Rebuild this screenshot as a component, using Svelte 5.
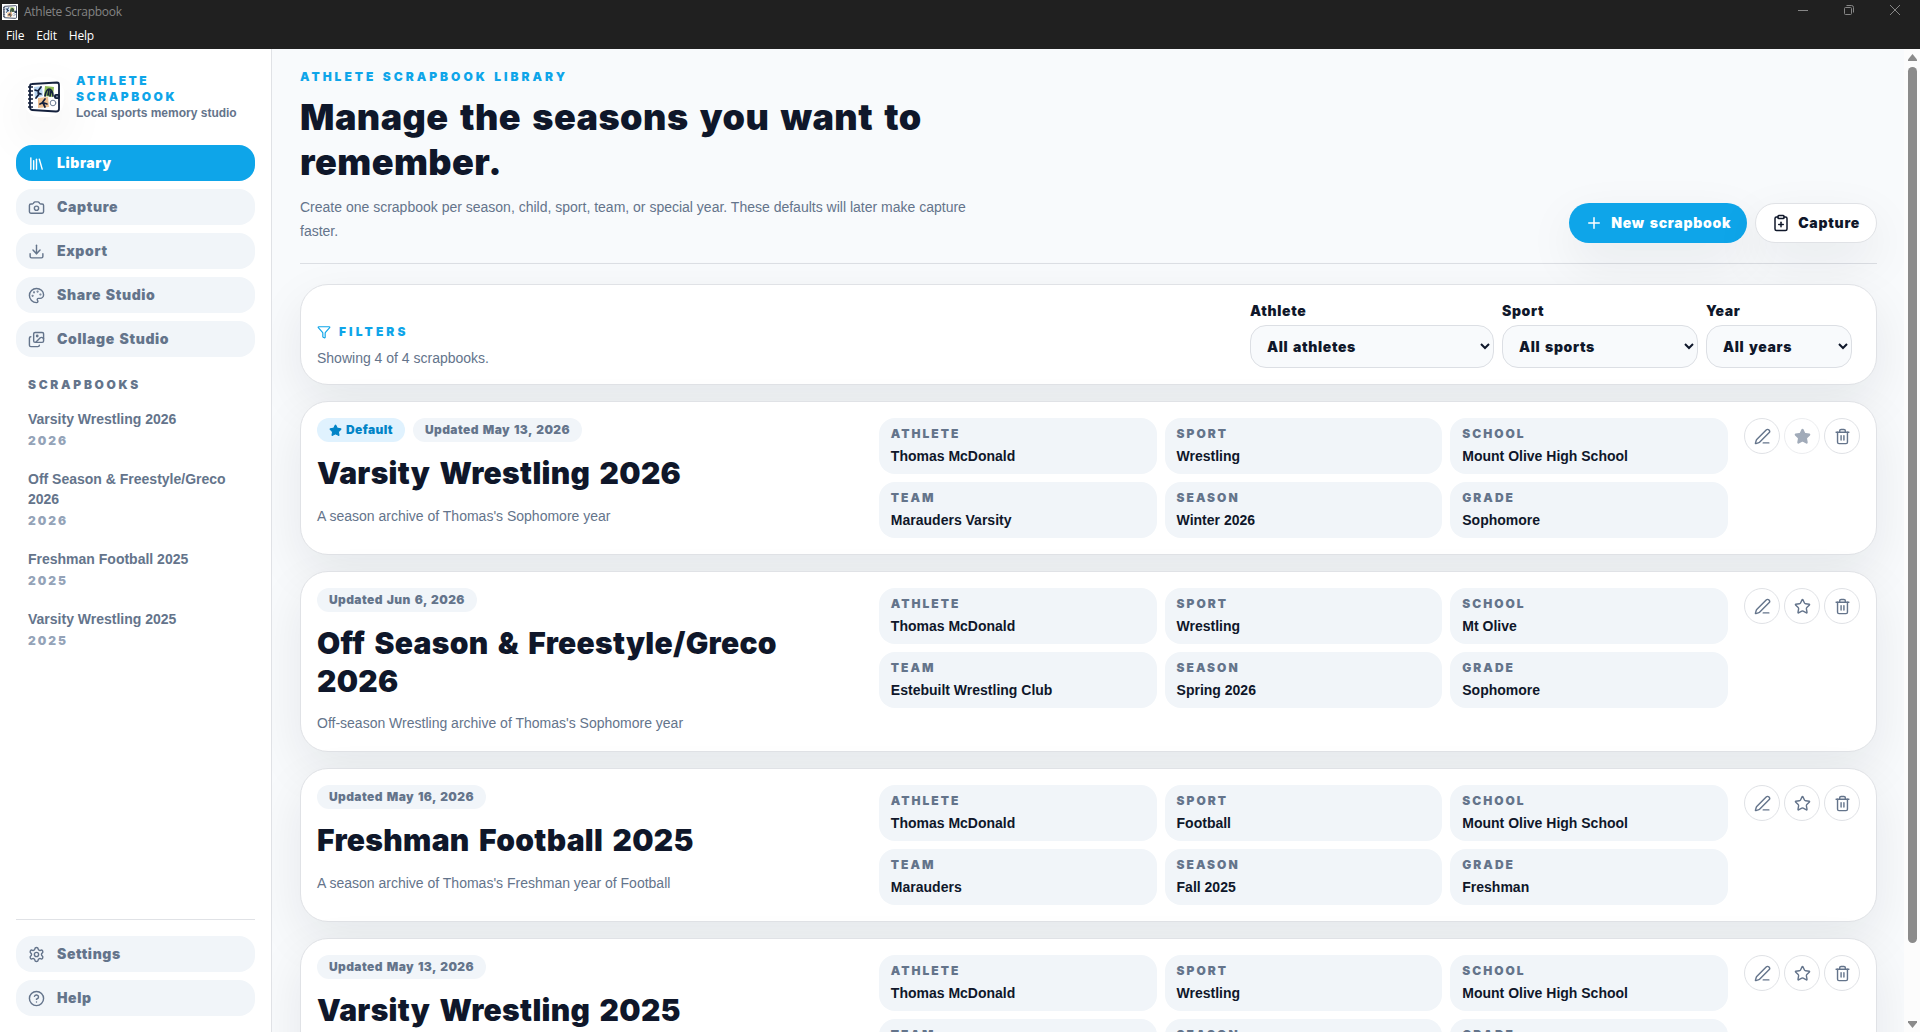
<script>
	const icons = {
		library: '<path d="m16 6 4 14"/><path d="M12 6v14"/><path d="M8 8v12"/><path d="M4 4v16"/>',
		camera:
			'<path d="M13.997 4a2 2 0 0 1 1.76 1.05l.486.9A2 2 0 0 0 18.003 7H20a2 2 0 0 1 2 2v9a2 2 0 0 1-2 2H4a2 2 0 0 1-2-2V9a2 2 0 0 1 2-2h1.997a2 2 0 0 0 1.759-1.048l.489-.904A2 2 0 0 1 10.004 4z"/><circle cx="12" cy="13" r="3"/>',
		download:
			'<path d="M12 15V3"/><path d="M21 15v4a2 2 0 0 1-2 2H5a2 2 0 0 1-2-2v-4"/><path d="m7 10 5 5 5-5"/>',
		palette:
			'<path d="M12 22a1 1 0 0 1 0-20 10 9 0 0 1 10 9 5 5 0 0 1-5 5h-2.25a1.75 1.75 0 0 0-1.4 2.8l.3.4a1.75 1.75 0 0 1-1.4 2.8z"/><circle cx="13.5" cy="6.5" r=".5" fill="currentColor"/><circle cx="17.5" cy="10.5" r=".5" fill="currentColor"/><circle cx="6.5" cy="12.5" r=".5" fill="currentColor"/><circle cx="8.5" cy="7.5" r=".5" fill="currentColor"/>',
		images:
			'<path d="m22 11-1.296-1.296a2.4 2.4 0 0 0-3.408 0L11 16"/><path d="M4 8a2 2 0 0 0-2 2v10a2 2 0 0 0 2 2h10a2 2 0 0 0 2-2"/><circle cx="13" cy="7" r="1" fill="currentColor"/><rect x="8" y="2" width="14" height="14" rx="2"/>',
		settings:
			'<path d="M9.671 4.136a2.34 2.34 0 0 1 4.659 0 2.34 2.34 0 0 0 3.319 1.915 2.34 2.34 0 0 1 2.33 4.033 2.34 2.34 0 0 0 0 3.831 2.34 2.34 0 0 1-2.33 4.033 2.34 2.34 0 0 0-3.319 1.915 2.34 2.34 0 0 1-4.659 0 2.34 2.34 0 0 0-3.32-1.915 2.34 2.34 0 0 1-2.33-4.033 2.34 2.34 0 0 0 0-3.831A2.34 2.34 0 0 1 6.35 6.051a2.34 2.34 0 0 0 3.319-1.915"/><circle cx="12" cy="12" r="3"/>',
		help: '<circle cx="12" cy="12" r="10"/><path d="M9.09 9a3 3 0 0 1 5.83 1c0 2-3 3-3 3"/><path d="M12 17h.01"/>',
		plus: '<path d="M5 12h14"/><path d="M12 5v14"/>',
		clipboard:
			'<rect width="8" height="4" x="8" y="2" rx="1"/><path d="M16 4h2a2 2 0 0 1 2 2v14a2 2 0 0 1-2 2H6a2 2 0 0 1-2-2V6a2 2 0 0 1 2-2h2"/><path d="M9 14h6"/><path d="M12 17v-6"/>',
		funnel:
			'<path d="M10 20a1 1 0 0 0 .553.895l2 1A1 1 0 0 0 14 21v-7a2 2 0 0 1 .517-1.341L21.74 4.67A1 1 0 0 0 21 3H3a1 1 0 0 0-.742 1.67l7.225 7.989A2 2 0 0 1 10 14z"/>',
		pen: '<path d="M13 21h8"/><path d="M21.174 6.812a1 1 0 0 0-3.986-3.987L3.842 16.174a2 2 0 0 0-.5.83l-1.321 4.352a.5.5 0 0 0 .623.622l4.353-1.32a2 2 0 0 0 .83-.497z"/>',
		star: '<path d="M11.525 2.295a.53.53 0 0 1 .95 0l2.31 4.679a2.123 2.123 0 0 0 1.595 1.16l5.166.756a.53.53 0 0 1 .294.904l-3.736 3.638a2.123 2.123 0 0 0-.611 1.878l.882 5.14a.53.53 0 0 1-.771.56l-4.618-2.428a2.122 2.122 0 0 0-1.973 0L6.396 21.01a.53.53 0 0 1-.77-.56l.881-5.139a2.122 2.122 0 0 0-.611-1.879L2.16 9.795a.53.53 0 0 1 .294-.906l5.165-.755a2.122 2.122 0 0 0 1.597-1.16z"/>',
		trash:
			'<path d="M10 11v6"/><path d="M14 11v6"/><path d="M19 6v14a2 2 0 0 1-2 2H7a2 2 0 0 1-2-2V6"/><path d="M3 6h18"/><path d="M8 6V4a2 2 0 0 1 2-2h4a2 2 0 0 1 2 2v2"/>'
	};

	const navItems = [
		{ id: "library", label: "Library", icon: "library" },
		{ id: "capture", label: "Capture", icon: "camera" },
		{ id: "export", label: "Export", icon: "download" },
		{ id: "share", label: "Share Studio", icon: "palette" },
		{ id: "collage", label: "Collage Studio", icon: "images" }
	];

	const footerItems = [
		{ id: "settings", label: "Settings", icon: "settings" },
		{ id: "help", label: "Help", icon: "help" }
	];

	const scrapbooks = [
		{
			title: "Varsity Wrestling 2026",
			year: "2026",
			updated: "May 13, 2026",
			description: "A season archive of Thomas's Sophomore year",
			athlete: "Thomas McDonald",
			sport: "Wrestling",
			school: "Mount Olive High School",
			team: "Marauders Varsity",
			season: "Winter 2026",
			grade: "Sophomore"
		},
		{
			title: "Off Season & Freestyle/Greco 2026",
			year: "2026",
			updated: "Jun 6, 2026",
			description: "Off-season Wrestling archive of Thomas's Sophomore year",
			athlete: "Thomas McDonald",
			sport: "Wrestling",
			school: "Mt Olive",
			team: "Estebuilt Wrestling Club",
			season: "Spring 2026",
			grade: "Sophomore"
		},
		{
			title: "Freshman Football 2025",
			year: "2025",
			updated: "May 16, 2026",
			description: "A season archive of Thomas's Freshman year of Football",
			athlete: "Thomas McDonald",
			sport: "Football",
			school: "Mount Olive High School",
			team: "Marauders",
			season: "Fall 2025",
			grade: "Freshman"
		},
		{
			title: "Varsity Wrestling 2025",
			year: "2025",
			updated: "May 13, 2026",
			description: "A season archive of Thomas's Freshman year",
			athlete: "Thomas McDonald",
			sport: "Wrestling",
			school: "Mount Olive High School",
			team: "Marauders",
			season: "Winter 2025",
			grade: "Freshman"
		}
	];

	const fields = ["athlete", "sport", "school", "team", "season", "grade"];

	let activePage = $state("library");
	let defaultTitle = $state("Varsity Wrestling 2026");
	let athlete = $state("");
	let sport = $state("");
	let year = $state("");

	let filtered = $derived(
		scrapbooks.filter(
			(book) =>
				(!athlete || book.athlete === athlete) &&
				(!sport || book.sport === sport) &&
				(!year || book.year === year)
		)
	);

	function unique(key) {
		return [...new Set(scrapbooks.map((book) => book[key]))];
	}
</script>

{#snippet icon(name, size = 17, fill = "none")}
	<svg
		class="icon"
		width={size}
		height={size}
		viewBox="0 0 24 24"
		{fill}
		stroke="currentColor"
		stroke-width="2"
		stroke-linecap="round"
		stroke-linejoin="round"
		aria-hidden="true">{@html icons[name]}</svg
	>
{/snippet}

{#snippet bookLogo(size)}
	<svg class="icon" width={size} height={size} viewBox="0 0 32 32" aria-hidden="true">
		<path d="M4 3 29 1.500Q31 1.500 31 4V28Q31 30.500 28 30.500L4 29Q2 29 2 26V5Q2 3 4 3Z" fill="#fff" stroke="#14213d" stroke-width="1.800" />
		<path d="M0 6h5M0 10h5M0 14h5M0 18h5M0 22h5M0 26h5" stroke="#14213d" stroke-width="1.300" />
		<path d="m6 6 8-1 1 10-8 2Z" fill="#b8d5f1" />
		<path d="m17 5 9 1-1 10-9-1Z" fill="#91bd58" />
		<path d="m10 17 10-1 1 10-11 1Z" fill="#f1c292" />
		<g fill="none" stroke="#14213d" stroke-width="1.700" stroke-linecap="round">
			<path d="m13 6-3 4-3-1m3 1 1 3-3 4m2-5 3 1" />
			<path d="M17 15c1-5 2-7 4-7s4 3 4 7m-4-6-1 5m3-4-1 5" />
			<path d="m17 18-3 4-2 1m3-1 2 4m-1-4 3 1" />
			<circle cx="25" cy="22" r="2.800" stroke="#718096" stroke-width="1" />
		</g>
		<rect x="26" y="13" width="6" height="5" rx="2" fill="#14213d" />
		<circle cx="29" cy="15.500" r="1" fill="#8391a5" />
	</svg>
{/snippet}

{#snippet navButton(item)}
	<button
		type="button"
		class="nav-button"
		class:active={activePage === item.id}
		onclick={() => (activePage = item.id)}
	>
		{@render icon(item.icon)}
		<span class="black">{item.label}</span>
	</button>
{/snippet}

<div class="window">
	<header class="chrome">
		<div class="title-bar">
			<span class="app-icon">{@render bookLogo(14)}</span>
			<span class="app-title">Athlete Scrapbook</span>
			<div class="window-controls">
				<svg width="12" height="12" viewBox="0 0 12 12"><path d="M1 6.500h10" /></svg>
				<svg width="12" height="12" viewBox="0 0 12 12"><path d="M3.500 1.500h5a2 2 0 0 1 2 2v5" /><rect x="1.500" y="3.500" width="7" height="7" rx="1" /></svg>
				<svg width="12" height="12" viewBox="0 0 12 12"><path d="m1 1 10 10M11 1 1 11" /></svg>
			</div>
		</div>
		<nav class="menu-bar">
			<span>File</span>
			<span>Edit</span>
			<span>Help</span>
		</nav>
	</header>

	<div class="shell">
		<aside class="sidebar">
			<div class="brand">
				<div class="brand-logo">{@render bookLogo(32)}</div>
				<div class="brand-text">
					<div class="brand-name black">Athlete Scrapbook</div>
					<div class="brand-tagline">Local sports memory studio</div>
				</div>
			</div>

			<nav class="nav">
				{#each navItems as item}
					{@render navButton(item)}
				{/each}
			</nav>

			<div class="book-list">
				<div class="book-list-heading black">Scrapbooks</div>
				{#each scrapbooks as book}
					<div class="book-link">
						<div class="book-link-title">{book.title}</div>
						<div class="book-link-year black">{book.year}</div>
					</div>
				{/each}
			</div>

			<nav class="nav sidebar-footer">
				{#each footerItems as item}
					{@render navButton(item)}
				{/each}
			</nav>
		</aside>

		<main class="content">
			<section class="page-header">
				<div class="intro">
					<div class="eyebrow black">Athlete Scrapbook Library</div>
					<h1 class="black">Manage the seasons you want to remember.</h1>
					<p>
						Create one scrapbook per season, child, sport, team, or special year. These defaults
						will later make capture faster.
					</p>
				</div>
				<div class="header-actions">
					<button type="button" class="pill primary">
						{@render icon("plus", 18)}
						<span class="black">New scrapbook</span>
					</button>
					<button type="button" class="pill">
						{@render icon("clipboard", 18)}
						<span class="black">Capture</span>
					</button>
				</div>
			</section>

			<section class="card filters">
				<div class="filters-info">
					<div class="filters-heading">
						{@render icon("funnel", 14)}
						<span class="black">Filters</span>
					</div>
					<div class="filters-count">
						Showing {filtered.length} of {scrapbooks.length} scrapbooks.
					</div>
				</div>
				<div class="filters-fields">
					<label>
						<span class="black">Athlete</span>
						<select class="black" bind:value={athlete}>
							<option value="">All athletes</option>
							{#each unique("athlete") as option}
								<option value={option}>{option}</option>
							{/each}
						</select>
					</label>
					<label>
						<span class="black">Sport</span>
						<select class="black" bind:value={sport}>
							<option value="">All sports</option>
							{#each unique("sport") as option}
								<option value={option}>{option}</option>
							{/each}
						</select>
					</label>
					<label>
						<span class="black">Year</span>
						<select class="black" bind:value={year}>
							<option value="">All years</option>
							{#each unique("year") as option}
								<option value={option}>{option}</option>
							{/each}
						</select>
					</label>
				</div>
			</section>

			{#each filtered as book}
				{@const isDefault = book.title === defaultTitle}
				<article class="card book">
					<div class="book-info">
						<div class="badges">
							{#if isDefault}
								<span class="badge default">
									{@render icon("star", 13, "currentColor")}
									<span class="black">Default</span>
								</span>
							{/if}
							<span class="badge"><span class="black">Updated {book.updated}</span></span>
						</div>
						<h2 class="black">{book.title}</h2>
						<p>{book.description}</p>
					</div>
					<dl class="details">
						{#each fields as field}
							<div class="detail">
								<dt class="black">{field}</dt>
								<dd>{book[field]}</dd>
							</div>
						{/each}
					</dl>
					<div class="book-actions">
						<button type="button" aria-label="Edit">{@render icon("pen")}</button>
						<button
							type="button"
							aria-label="Make default"
							disabled={isDefault}
							onclick={() => (defaultTitle = book.title)}
						>
							{@render icon("star", 17, isDefault ? "currentColor" : "none")}
						</button>
						<button type="button" aria-label="Delete">{@render icon("trash")}</button>
					</div>
				</article>
			{/each}
		</main>

		<div class="scrollbar">
			<svg width="9" height="7" viewBox="0 0 9 7"><path d="M4.500 0 9 5.500V7H0V5.500Z" /></svg>
			<div class="scroll-thumb"></div>
			<svg width="9" height="7" viewBox="0 0 9 7"><path d="M4.500 7 9 1.500V0H0V1.500Z" /></svg>
		</div>
	</div>
</div>

<style>
	:global(body) {
		overflow: hidden;
	}

	.window {
		display: flex;
		flex-direction: column;
		height: 1032px;
		font-family: "Liberation Sans", Arial, sans-serif;
		font-size: 14px;
		line-height: 20px;
		color: #0f172a;
		background: #f8fafc;
	}

	.window :global(*) {
		box-sizing: border-box;
	}

	h1,
	h2,
	p,
	dl,
	dd {
		margin: 0;
	}

	button,
	select {
		font: inherit;
		color: inherit;
	}

	.icon {
		display: block;
		flex: none;
	}

	.black {
		font-family: Inter, "Arial Black", sans-serif;
		font-weight: 900;
		letter-spacing: 0.62px;
		word-spacing: 0.1em;
	}

	/* Window chrome */
	.chrome {
		flex: none;
		height: 49px;
		background: #202020;
		font-family: "Open Sans", "Segoe UI", sans-serif;
		font-size: 12px;
	}

	.title-bar {
		display: flex;
		align-items: center;
		height: 23px;
		padding-left: 2px;
	}

	.app-icon {
		padding: 1px;
		background: #fff;
	}

	.app-title {
		margin-left: 6px;
		color: #848484;
		letter-spacing: -0.28px;
	}

	.window-controls {
		display: flex;
		gap: 34px;
		margin: -3px 19px 0 auto;
	}

	.window-controls svg {
		fill: none;
		stroke: #868686;
		stroke-width: 1;
	}

	.menu-bar {
		display: flex;
		gap: 12px;
		padding: 3px 6px;
		color: #fff;
		letter-spacing: -0.2px;
	}

	/* Sidebar */
	.shell {
		display: flex;
		flex: 1;
		min-height: 0;
	}

	.sidebar {
		display: flex;
		flex-direction: column;
		width: 272px;
		flex: none;
		padding: 16px;
		border-right: 1px solid #e0e2e6;
		background: #fff;
		overflow: hidden;
	}

	.brand {
		display: flex;
		align-items: center;
		gap: 12px;
		padding: 8px 8px 6px;
		margin-bottom: 18px;
	}

	.brand-logo {
		display: flex;
		flex: none;
		align-items: center;
		justify-content: center;
		width: 40px;
		height: 40px;
		border-radius: 16px;
		background: #fff;
		box-shadow: 0 18px 50px rgba(15, 23, 42, 0.08);
	}

	.brand-text {
		flex: 1;
		line-height: 16px;
	}

	.brand-name {
		font-size: 12px;
		letter-spacing: 2.55px;
		color: #0ea5e9;
		text-transform: uppercase;
	}

	.brand-tagline {
		font-size: 12px;
		font-weight: 700;
		color: #64748b;
		white-space: nowrap;
	}

	.nav {
		display: flex;
		flex-direction: column;
		gap: 8px;
	}

	.nav-button {
		display: flex;
		align-items: center;
		gap: 12px;
		height: 36px;
		padding: 0 12px;
		border: none;
		border-radius: 16px;
		background: #f1f5f9;
		color: #64748b;
	}

	.nav-button.active {
		background: #0ea5e9;
		color: #fff;
	}

	.book-list-heading {
		padding: 0 12px;
		margin: 18px 0 8px;
		font-size: 12px;
		letter-spacing: 2.7px;
		color: #64748b;
		text-transform: uppercase;
	}

	.book-link {
		padding: 6px 12px 12px;
		color: #64748b;
	}

	.book-link-title {
		font-weight: 700;
	}

	.book-link-year {
		margin-top: 2px;
		font-size: 12px;
		letter-spacing: 1.95px;
		color: #94a3b8;
	}

	.sidebar-footer {
		margin-top: auto;
		padding-top: 16px;
		border-top: 1px solid #e0e2e6;
	}

	/* Page header */
	.content {
		display: flex;
		flex: 1;
		flex-direction: column;
		gap: 16px;
		min-width: 0;
		padding: 18px 27px 0 28px;
		overflow: hidden;
	}

	.page-header {
		display: flex;
		flex: none;
		align-items: flex-end;
		justify-content: space-between;
		padding-bottom: 20px;
		margin-bottom: 4px;
		border-bottom: 1px solid #dcdfe4;
	}

	.intro {
		width: 672px;
	}

	.eyebrow {
		font-size: 12px;
		letter-spacing: 2.98px;
		color: #0ea5e9;
		text-transform: uppercase;
	}

	h1 {
		margin-top: 8px;
		font-size: 36px;
		line-height: 45px;
	}

	h1.black {
		letter-spacing: 0.46px;
	}

	.intro p {
		margin-top: 10px;
		line-height: 24px;
		color: #64748b;
	}

	.header-actions {
		display: flex;
		gap: 8px;
	}

	.pill {
		display: flex;
		align-items: center;
		gap: 8px;
		height: 40px;
		padding: 0 16px;
		border: 1px solid #e0e2e6;
		border-radius: 20px;
		background: #fff;
		box-shadow: 0 18px 50px rgba(15, 23, 42, 0.08);
	}

	.pill.primary {
		border: none;
		background: #0ea5e9;
		color: #fff;
	}

	.pill .black {
		letter-spacing: 0.74px;
	}

	/* Cards */
	.card {
		flex: none;
		padding: 16px;
		border: 1px solid #e0e2e6;
		border-radius: 28px;
		background: #fff;
		box-shadow: 0 18px 50px rgba(15, 23, 42, 0.08);
	}

	.filters {
		display: flex;
		align-items: flex-end;
		justify-content: space-between;
		height: 101px;
	}

	.filters-info {
		color: #64748b;
	}

	.filters-heading {
		display: flex;
		align-items: center;
		gap: 8px;
		color: #0ea5e9;
		font-size: 12px;
		text-transform: uppercase;
	}

	.filters-heading .black {
		letter-spacing: 3.1px;
	}

	.filters-count {
		margin-top: 6px;
	}

	.filters-fields {
		display: grid;
		grid-template-columns: 244px 196px 146px;
		gap: 8px;
		margin-right: 8px;
	}

	.filters-fields label {
		display: flex;
		flex-direction: column;
		gap: 4px;
	}

	.filters-fields select {
		height: 43px;
		padding: 0 12px;
		border: 1px solid #dcdfe4;
		border-radius: 16px;
		background: #f8fafc;
	}

	.book {
		display: grid;
		grid-template-columns: minmax(0, 0.9fr) minmax(0, 1.4fr) auto;
		gap: 16px;
		align-items: start;
	}

	.badges {
		display: flex;
		gap: 8px;
	}

	.badge {
		display: flex;
		align-items: center;
		gap: 4px;
		height: 24px;
		padding: 0 12px;
		border-radius: 12px;
		background: #f1f5f9;
		color: #64748b;
		font-size: 12px;
	}

	.badge .black {
		letter-spacing: 0.4px;
	}

	.badge.default {
		background: #e0f2fe;
		color: #0284c7;
	}

	h2 {
		margin-top: 13px;
		font-size: 30px;
		line-height: 37.5px;
	}

	h2.black {
		letter-spacing: 0.3px;
	}

	.book-info p {
		margin-top: 11px;
		line-height: 24px;
		color: #64748b;
	}

	.details {
		display: grid;
		grid-template-columns: repeat(3, minmax(0, 1fr));
		gap: 8px;
	}

	.detail {
		height: 56px;
		padding: 8px 12px;
		border-radius: 16px;
		background: #f1f5f9;
	}

	dt {
		font-size: 12px;
		line-height: 16px;
		color: #64748b;
		text-transform: uppercase;
	}

	dt.black {
		letter-spacing: 2px;
	}

	dd {
		margin-top: 4px;
		font-weight: 700;
	}

	.book-actions {
		display: flex;
		gap: 4px;
	}

	.book-actions button {
		display: flex;
		align-items: center;
		justify-content: center;
		width: 36px;
		height: 36px;
		padding: 1px 0 0 1px;
		border: 1px solid #e0e2e6;
		border-radius: 50%;
		background: #fff;
		color: #64748b;
	}

	.book-actions button:disabled {
		opacity: 0.6;
	}

	/* Scrollbar */
	.scrollbar {
		display: flex;
		flex-direction: column;
		align-items: center;
		width: 16px;
		padding: 5px 0 4px;
		background: #fcfcfc;
	}

	.scrollbar svg {
		flex: none;
		fill: #8b8b8b;
	}

	.scroll-thumb {
		width: 9px;
		height: 876px;
		margin: 6px 0 auto;
		border-radius: 5px;
		background: #8b8b8b;
	}
</style>
